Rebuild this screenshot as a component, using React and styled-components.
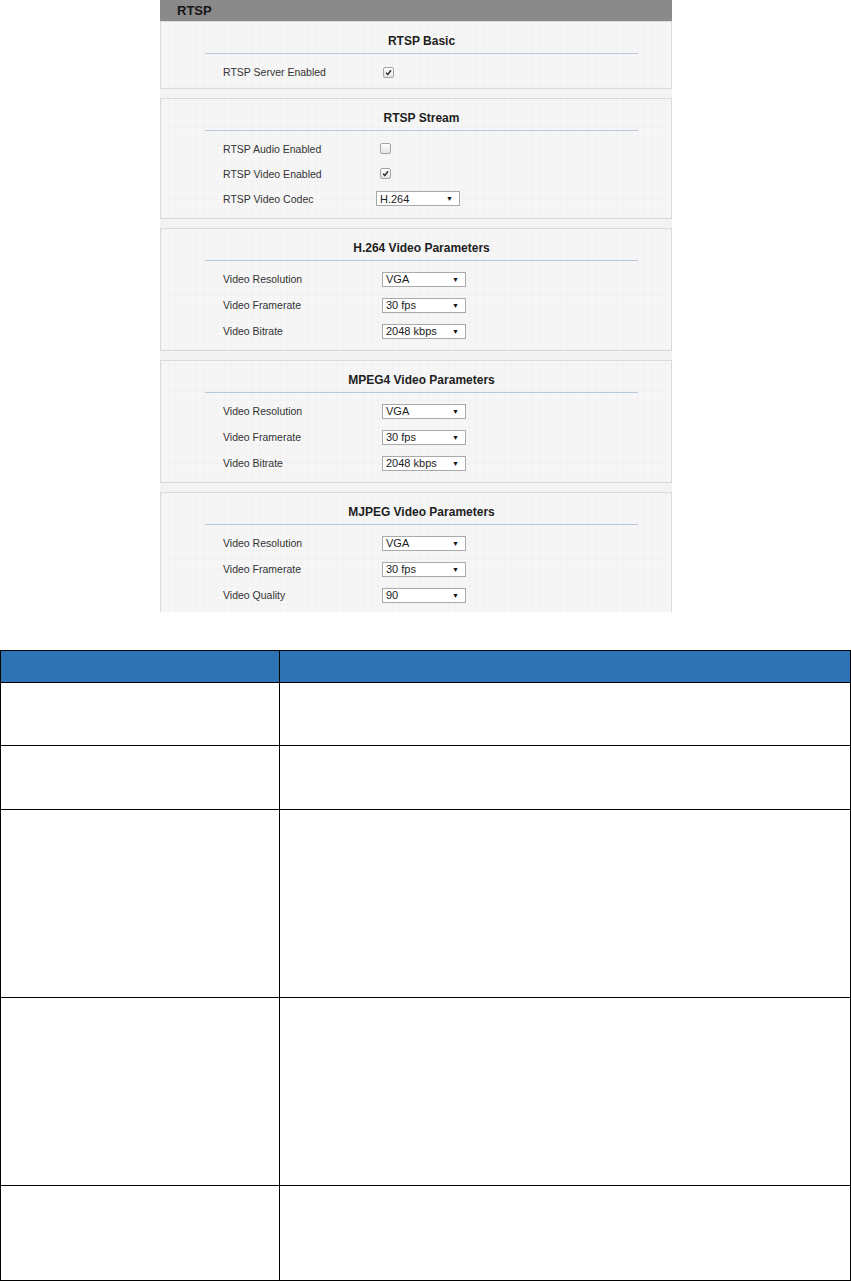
import React from "react";
import styled, { createGlobalStyle } from "styled-components";

const GlobalStyle = createGlobalStyle`
  html, body {
    margin: 0;
    padding: 0;
    background: #ffffff;
    font-family: "Liberation Sans", Arial, sans-serif;
  }
`;

const Page = styled.div`
  width: 851px;
  display: flex;
  flex-direction: column;
`;

const Shot = styled.div`
  width: 512px;
  height: 612px;
  margin-left: 160px;
  overflow: hidden;
  background: #f3f3f3;
`;

const TopBar = styled.div`
  height: 21px;
  line-height: 22px;
  padding-left: 17px;
  background: #8a8a8a;
  color: #151515;
  font-weight: 700;
  font-size: 13px;
`;

const Stack = styled.div`
  display: flex;
  flex-direction: column;
  gap: 9px;
`;

const Panel = styled.div`
  border: 1px solid #dadada;
  background-color: #f6f6f6;
  background-image: repeating-linear-gradient(
      90deg,
      rgba(0, 0, 0, 0.014) 0 1px,
      transparent 1px 7px
    ),
    repeating-linear-gradient(
      0deg,
      rgba(0, 0, 0, 0.014) 0 1px,
      transparent 1px 9px
    );
  padding: 10px 0 ${(p) => p.$bottom || 6}px;
`;

const Inner = styled.div`
  margin-left: 44px;
  width: 433px;
`;

const PanelTitle = styled.div`
  text-align: center;
  font-weight: 700;
  font-size: 12px;
  line-height: 18px;
  color: #1e1e1e;
  padding-bottom: 3px;
  border-bottom: 1px solid #b9c9da;
`;

const Rows = styled.div`
  padding-top: 5px;
  display: flex;
  flex-direction: column;
`;

const Row = styled.div`
  height: ${(p) => p.$h || 26}px;
  display: flex;
  align-items: center;
  padding-left: 18px;
`;

const Label = styled.span`
  width: ${(p) => p.$w}px;
  flex-shrink: 0;
  font-size: 10.5px;
  color: #333;
`;

const Check = styled.span`
  width: 9px;
  height: 9px;
  margin-left: ${(p) => p.$ml || 0}px;
  border: 1px solid #a5a5a5;
  border-radius: 2px;
  background: linear-gradient(#fdfdfd, #e4e4e4);
  display: flex;
  align-items: center;
  justify-content: center;
`;

const Dropdown = styled.div`
  width: 84px;
  height: 15px;
  box-sizing: border-box;
  border: 1px solid #a9a9a9;
  background: #fff;
  display: flex;
  align-items: center;
  justify-content: space-between;
  padding: 0 6px 0 3px;
  font-size: 11px;
  color: #222;
`;

const Arrow = styled.span`
  font-size: 7px;
  color: #111;
`;

const Table = styled.table`
  margin-top: 38px;
  width: 851px;
  border-collapse: collapse;
  table-layout: fixed;
`;

const HeadCell = styled.th`
  background: #2e74b5;
  border: 1px solid #000;
  height: 31px;
  padding: 0;
`;

const Cell = styled.td`
  border: 1px solid #000;
  height: ${(p) => p.$h}px;
  padding: 0;
`;

const CheckMark = () => (
  <svg width="7" height="7" viewBox="0 0 10 10">
    <path d="M1.5 5.2 L4 7.8 L8.6 1.8" fill="none" stroke="#2a2a2a" strokeWidth="2" />
  </svg>
);

const Field = ({ label, w, check, checked, select, ml, h }) => (
  <Row $h={h}>
    <Label $w={w}>{label}</Label>
    {check && <Check $ml={ml}>{checked && <CheckMark />}</Check>}
    {select && (
      <Dropdown>
        <span>{select}</span>
        <Arrow>▼</Arrow>
      </Dropdown>
    )}
  </Row>
);

const Section = ({ title, children, bottom }) => (
  <Panel $bottom={bottom}>
    <Inner>
      <PanelTitle>{title}</PanelTitle>
      <Rows>{children}</Rows>
    </Inner>
  </Panel>
);

const videoSections = [
  {
    title: "H.264 Video Parameters",
    rows: [
      ["Video Resolution", "VGA"],
      ["Video Framerate", "30 fps"],
      ["Video Bitrate", "2048 kbps"],
    ],
  },
  {
    title: "MPEG4 Video Parameters",
    rows: [
      ["Video Resolution", "VGA"],
      ["Video Framerate", "30 fps"],
      ["Video Bitrate", "2048 kbps"],
    ],
  },
  {
    title: "MJPEG Video Parameters",
    rows: [
      ["Video Resolution", "VGA"],
      ["Video Framerate", "30 fps"],
      ["Video Quality", "90"],
    ],
  },
];

const tableRows = [62, 63, 187, 187, 94];

export default function App() {
  return (
    <Page>
      <GlobalStyle />
      <Shot>
        <TopBar>RTSP</TopBar>
        <Stack>
          <Section title="RTSP Basic" bottom={3}>
            <Field label="RTSP Server Enabled" w={160} check checked />
          </Section>
          <Section title="RTSP Stream" bottom={7}>
            <Field label="RTSP Audio Enabled" w={153} check ml={4} h={25} />
            <Field label="RTSP Video Enabled" w={153} check checked ml={4} h={25} />
            <Field label="RTSP Video Codec" w={153} select="H.264" h={25} />
          </Section>
          {videoSections.map((s) => (
            <Section key={s.title} title={s.title}>
              {s.rows.map(([l, v]) => (
                <Field key={l} label={l} w={159} select={v} />
              ))}
            </Section>
          ))}
        </Stack>
      </Shot>
      <Table>
        <colgroup>
          <col style={{ width: 279 }} />
          <col />
        </colgroup>
        <thead>
          <tr>
            <HeadCell />
            <HeadCell />
          </tr>
        </thead>
        <tbody>
          {tableRows.map((h, i) => (
            <tr key={i}>
              <Cell $h={h} />
              <Cell $h={h} />
            </tr>
          ))}
        </tbody>
      </Table>
    </Page>
  );
}
